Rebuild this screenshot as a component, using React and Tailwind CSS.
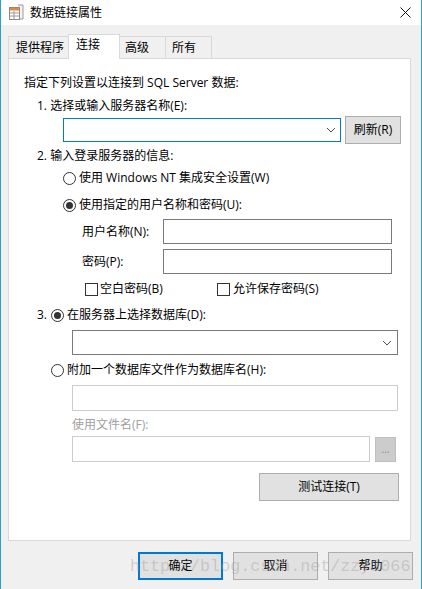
import React from "react";

const font = { fontFamily: '"Open Sans", "Noto Sans CJK SC", sans-serif' };

function Radio({ checked }) {
  return (
    <span className="w-[13px] h-[13px] rounded-full border border-[#333333] bg-white flex items-center justify-center shrink-0">
      {checked && <span className="w-[7px] h-[7px] rounded-full bg-[#333333]" />}
    </span>
  );
}

function Check() {
  return <span className="w-[13px] h-[13px] border border-[#333333] bg-white shrink-0" />;
}

function Chevron() {
  return (
    <svg width="10" height="6" viewBox="0 0 10 6" className="shrink-0">
      <polyline points="1,1 5,5 9,1" fill="none" stroke="#505050" strokeWidth="1" />
    </svg>
  );
}

function TitleIcon() {
  return (
    <svg width="17" height="17" viewBox="0 0 17 17">
      <path d="M10 1h5v14h-5" fill="#f4f4f4" stroke="#9a9a9a" />
      <rect x="1.5" y="3.5" width="10" height="12" fill="#ffffff" stroke="#8a8a8a" />
      <rect x="2" y="4" width="9" height="2.5" fill="#e08a3c" />
      <line x1="2" y1="9" x2="11" y2="9" stroke="#9a9a9a" />
      <line x1="2" y1="12" x2="11" y2="12" stroke="#9a9a9a" />
      <line x1="6" y1="7" x2="6" y2="15" stroke="#9a9a9a" />
    </svg>
  );
}

export default function App() {
  return (
    <div
      className="w-[422px] h-[589px] bg-[#f0f0f0] border-x border-[#2a9fd0] flex flex-col relative overflow-hidden text-[12px] leading-[16px] text-black"
      style={font}
    >
      {/* Title bar */}
      <div className="h-[25px] bg-white flex items-center pl-[7px] pr-[10px] shrink-0">
        <TitleIcon />
        <span className="ml-[5px]">数据链接属性</span>
        <div className="flex-1" />
        <svg width="11" height="11" viewBox="0 0 11 11">
          <path d="M0.5 0.5L10.5 10.5M10.5 0.5L0.5 10.5" stroke="#111" strokeWidth="1" />
        </svg>
      </div>

      <div className="px-[7px] pt-[9px] flex flex-col">
        {/* Tabs */}
        <div className="flex items-end h-[24px]">
          <div className="w-[61px] h-[22px] border border-b-0 border-[#d9d9d9] bg-[#f0f0f0] pl-[7px] pt-[3px]">提供程序</div>
          <div className="w-[52px] h-[25px] -ml-px -mb-px relative z-10 border border-b-0 border-[#d9d9d9] bg-white pl-[7px] pt-[2px]">连接</div>
          <div className="w-[47px] h-[22px] -ml-px border border-b-0 border-[#d9d9d9] bg-[#f0f0f0] pl-[5px] pt-[3px]">高级</div>
          <div className="w-[47px] h-[22px] -ml-px border border-b-0 border-[#d9d9d9] bg-[#f0f0f0] pl-[6px] pt-[3px]">所有</div>
        </div>

        {/* Panel */}
        <div className="w-[403px] h-[483px] bg-white border border-[#d9d9d9] flex flex-col pt-[16px]">
          <div className="pl-[15px]">指定下列设置以连接到 SQL Server 数据:</div>
          <div className="pl-[28px] mt-[7px]">1. 选择或输入服务器名称(E):</div>
          <div className="flex items-center pl-[54px] mt-[2px] h-[28px]">
            <div className="w-[278px] h-[24px] border border-[#0078d7] flex items-center justify-end pr-[4px]">
              <Chevron />
            </div>
            <div className="ml-[4px] w-[56px] h-[28px] bg-[#e1e1e1] border border-[#adadad] flex items-center justify-center">刷新(R)</div>
          </div>
          <div className="pl-[28px] mt-[4px]">2. 输入登录服务器的信息:</div>
          <div className="pl-[54px] mt-[6px] flex items-center gap-[3px] h-[16px]">
            <Radio />
            <span>使用 Windows NT 集成安全设置(W)</span>
          </div>
          <div className="pl-[54px] mt-[11px] flex items-center gap-[3px] h-[16px]">
            <Radio checked />
            <span>使用指定的用户名称和密码(U):</span>
          </div>
          <div className="pl-[73px] mt-[6px] flex items-center">
            <span className="w-[81px]">用户名称(N):</span>
            <div className="w-[229px] h-[25px] border border-[#7a7a7a]" />
          </div>
          <div className="pl-[73px] mt-[5px] flex items-center">
            <span className="w-[81px]">密码(P):</span>
            <div className="w-[229px] h-[25px] border border-[#7a7a7a]" />
          </div>
          <div className="pl-[76px] mt-[7px] flex items-center h-[16px]">
            <Check />
            <span className="ml-[2px] w-[117px]">空白密码(B)</span>
            <Check />
            <span className="ml-[3px]">允许保存密码(S)</span>
          </div>
          <div className="pl-[28px] mt-[10px] flex items-center h-[16px]">
            <span className="w-[14px]">3.</span>
            <Radio checked />
            <span className="ml-[3px]">在服务器上选择数据库(D):</span>
          </div>
          <div className="pl-[63px] mt-[7px]">
            <div className="w-[326px] h-[25px] border border-[#7a7a7a] flex items-center justify-end pr-[5px]">
              <Chevron />
            </div>
          </div>
          <div className="pl-[42px] mt-[7px] flex items-center h-[16px]">
            <Radio />
            <span className="ml-[3px]">附加一个数据库文件作为数据库名(H):</span>
          </div>
          <div className="pl-[63px] mt-[7px]">
            <div className="w-[326px] h-[26px] border border-[#cccccc]" />
          </div>
          <div className="pl-[63px] mt-[6px] text-[#a0a0a0]">使用文件名(F):</div>
          <div className="pl-[63px] mt-[3px] flex items-center">
            <div className="w-[298px] h-[26px] border border-[#cccccc]" />
            <div className="ml-[5px] w-[21px] h-[25px] bg-[#cccccc] border border-[#bfbfbf] flex items-center justify-center text-[#8a8a8a] text-[10px] leading-[10px]">...</div>
          </div>
          <div className="flex justify-end pr-[11px] mt-[11px]">
            <div className="w-[140px] h-[28px] bg-[#e1e1e1] border border-[#adadad] flex items-center justify-center">测试连接(T)</div>
          </div>
        </div>
      </div>

      {/* Bottom buttons */}
      <div className="flex justify-end gap-[10px] pr-[8px] mt-[11px]">
        <div className="w-[85px] h-[28px] bg-[#e1e1e1] border-2 border-[#0078d7] flex items-center justify-center">确定</div>
        <div className="w-[85px] h-[28px] bg-[#e1e1e1] border border-[#adadad] flex items-center justify-center">取消</div>
        <div className="w-[85px] h-[28px] bg-[#e1e1e1] border border-[#adadad] flex items-center justify-center">帮助</div>
      </div>

      {/* Watermark */}
      <div
        className="absolute left-[129px] top-[557px] text-[16.7px] leading-[20px] text-[#9a9a9a]/40 pointer-events-none whitespace-nowrap"
        style={{ fontFamily: '"Liberation Mono", monospace' }}
      >
        http://blog.csdn.net/zzy3066
      </div>
    </div>
  );
}
